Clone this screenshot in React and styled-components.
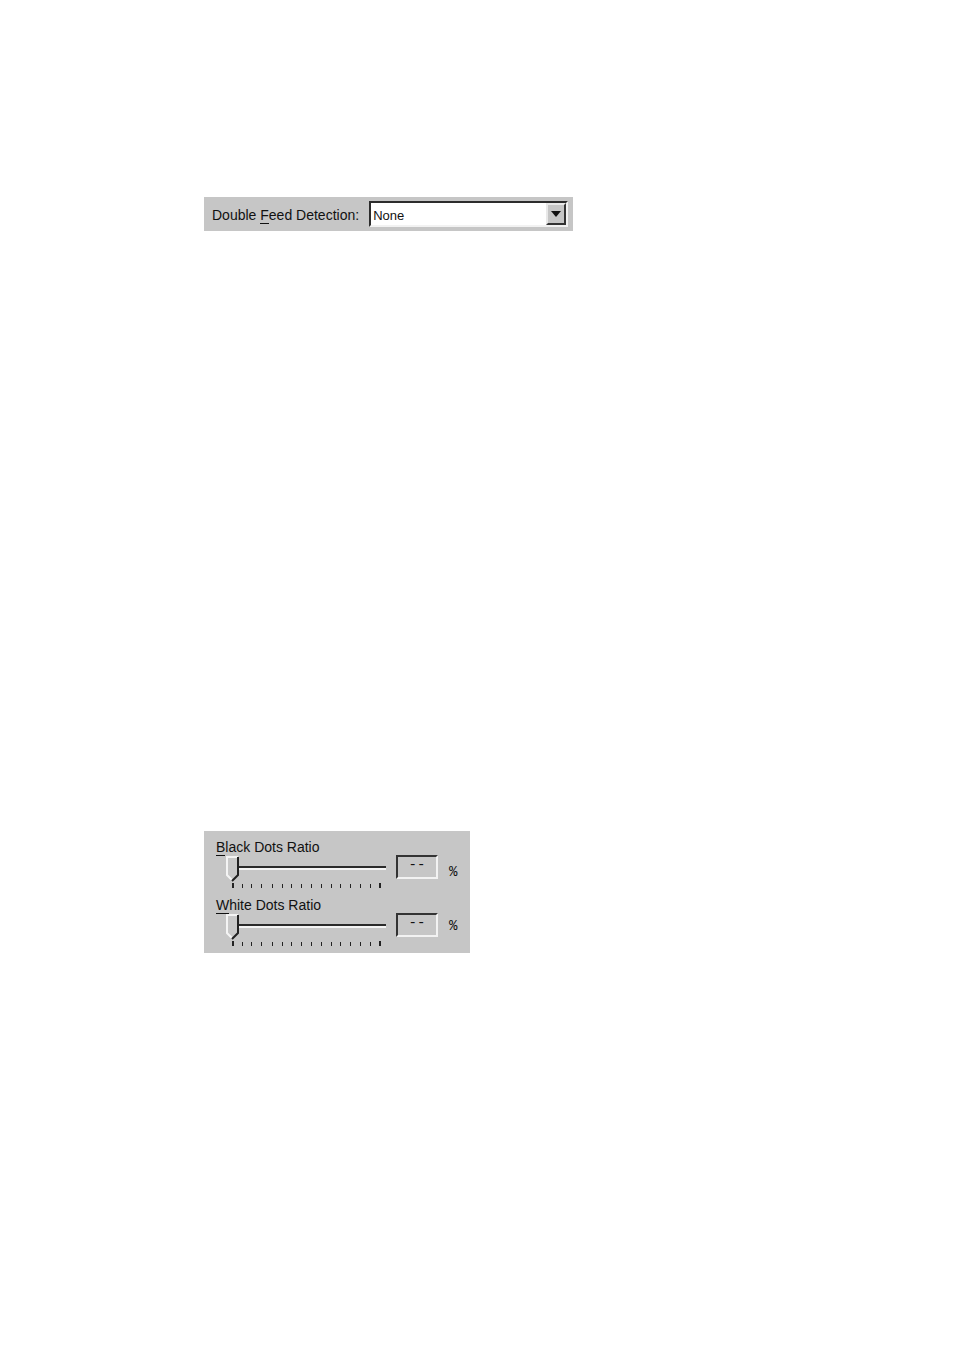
import { useState } from "react";
import styled, { createGlobalStyle } from "styled-components";

const GlobalStyle = createGlobalStyle`
  * {
    box-sizing: border-box;
  }
  body {
    margin: 0;
    background-color: #fff;
    color: #111;
    font-family: "Liberation Sans", Arial, sans-serif;
    font-size: 14px;
    line-height: 16px;
  }
`;

const Page = styled.main`
  display: flex;
  flex-direction: column;
  align-items: flex-start;
  gap: 600px;
  padding: 197px 24px 24px 204px;
`;
const Panel = styled.section`
  display: flex;
  background-color: #c6c6c6;
`;
const FeedPanel = styled(Panel)`
  align-items: baseline;
  gap: 10px;
  padding: 4px 5px 4px 8px;
`;
const DotsPanel = styled(Panel)`
  gap: 11px;
  padding: 8px 13px 6px 12px;
`;
const Label = styled.label`
  display: block;
  white-space: nowrap;
`;
const Key = styled.span`
  border-bottom: 1px solid #111;
`;

const SelectBox = styled.div`
  position: relative;
  width: 199px;
  border: 2px solid;
  border-color: #2c2c2c #f2f2f2 #f2f2f2 #2c2c2c;
`;
const Select = styled.select`
  appearance: none;
  display: block;
  width: 100%;
  height: 22px;
  padding: 2px 22px 0 2px;
  border: none;
  border-radius: 0;
  background-color: #fff;
  color: #111;
  font-family: inherit;
  font-size: 13px;
  outline: none;
`;
const SelectArrow = styled.span`
  position: absolute;
  top: 0;
  right: 0;
  width: 20px;
  height: 22px;
  display: flex;
  align-items: center;
  justify-content: center;
  border: 2px solid;
  border-color: #e8e8e8 #333 #333 #e8e8e8;
  background-color: #c6c6c6;
  pointer-events: none;
`;

const Ratios = styled.div`
  display: flex;
  flex-direction: column;
  gap: 8px;
`;
const RatioRow = styled.div`
  display: flex;
  align-items: flex-start;
  gap: 10px;
  padding-left: 10px;
`;
const Slider = styled.div`
  display: flex;
  flex-direction: column;
  padding-top: 1px;
`;
const thumb = encodeURIComponent(
  `<svg xmlns="http://www.w3.org/2000/svg" width="13" height="26">
    <path d="M0 0H13V20L7 26H6L0 20Z" fill="#c9c9c9"/>
    <path d="M12 1H1V19L6 24" fill="none" stroke="#f4f4f4" stroke-width="2"/>
    <path d="M12 1V19L6 25" fill="none" stroke="#222" stroke-width="2"/>
  </svg>`
);
const Range = styled.input`
  appearance: none;
  display: block;
  width: 160px;
  height: 26px;
  margin: 0;
  /* the groove, a dark line with a light one under it */
  background: linear-gradient(#2a2a2a 50%, #f4f4f4 50%) 6px 10px / 154px 4px
    no-repeat;
  outline: none;

  &::-webkit-slider-thumb {
    appearance: none;
    width: 13px;
    height: 26px;
    background: url("data:image/svg+xml,${thumb}") no-repeat;
  }
`;
const Value = styled.output`
  width: 42px;
  height: 24px;
  border: 2px solid;
  border-color: #333 #f2f2f2 #f2f2f2 #333;
  font-family: "Liberation Mono", monospace;
  line-height: 16px;
  text-align: center;
`;
const Units = styled.div`
  display: flex;
  flex-direction: column;
  gap: 38px;
  padding-top: 25px;
  font-family: "Liberation Mono", monospace;
`;

const TICKS = [6, 16, 25, 35, 46, 56, 65, 75, 85, 95, 105, 114, 124, 134, 144, 153];

const Ticks = () => (
  <svg width="160" height="7" aria-hidden="true">
    {TICKS.map((x, i) => {
      const end = i === 0 || i === TICKS.length - 1;
      return (
        <rect
          key={x}
          x={x}
          y={end ? 1 : 2}
          width={end ? 2 : 1}
          height={end ? 5 : 4}
          fill="#222"
        />
      );
    })}
  </svg>
);

const Ratio = ({ id, accessKey, text }) => {
  const [value, setValue] = useState(0);

  return (
    <div>
      <Label htmlFor={id}>
        <Key>{accessKey}</Key>
        {text}
      </Label>
      <RatioRow>
        <Slider>
          <Range
            id={id}
            type="range"
            min="0"
            max="15"
            value={value}
            onChange={(e) => setValue(Number(e.target.value))}
          />
          <Ticks />
        </Slider>
        <Value htmlFor={id}>{value === 0 ? "--" : value}</Value>
      </RatioRow>
    </div>
  );
};

const App = () => {
  return (
    <>
      <GlobalStyle />
      <Page>
        <FeedPanel>
          <Label htmlFor="doubleFeed">
            Double <Key>F</Key>eed Detection:
          </Label>
          <SelectBox>
            <Select id="doubleFeed">
              <option>None</option>
            </Select>
            <SelectArrow>
              <svg width="10" height="6" aria-hidden="true">
                <path d="M0 0H10L5 6Z" fill="#111" />
              </svg>
            </SelectArrow>
          </SelectBox>
        </FeedPanel>
        <DotsPanel>
          <Ratios>
            <Ratio id="blackDots" accessKey="B" text="lack Dots Ratio" />
            <Ratio id="whiteDots" accessKey="W" text="hite Dots Ratio" />
          </Ratios>
          <Units>
            <span>%</span>
            <span>%</span>
          </Units>
        </DotsPanel>
      </Page>
    </>
  );
};

export default App;
